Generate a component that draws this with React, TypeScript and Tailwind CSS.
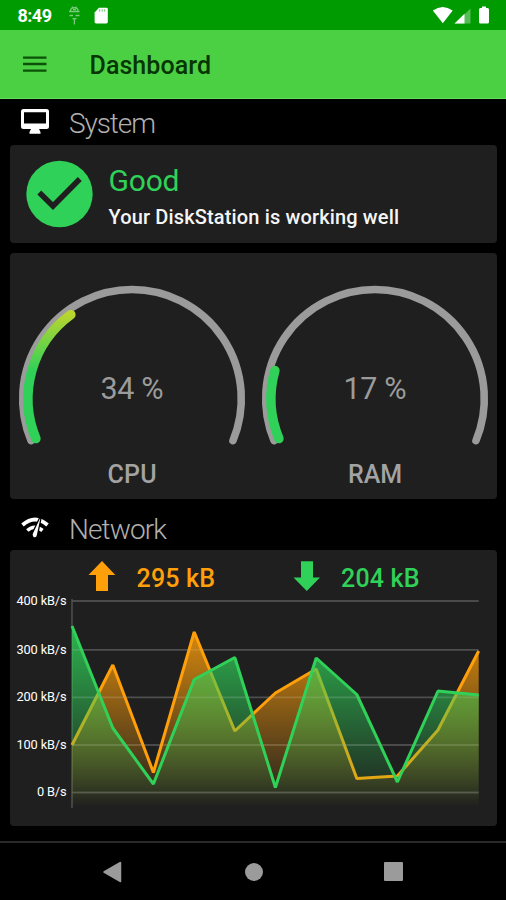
import type { ReactNode } from "react";

const ROBOTO = "font-[Roboto,sans-serif]";

function Label({ x, y, width, size, weight = 400, fill, children }: { x: number; y: number; width: number; size: number; weight?: number; fill: string; children: string }) {
  return (
    <text x={x} y={y} fontSize={size} fontWeight={weight} fill={fill} textLength={width} lengthAdjust="spacing">
      {children}
    </text>
  );
}

function StatusBar() {
  return (
    <div className="flex h-[30px] items-center bg-[#009b00] text-white">
      <svg className="ml-[17px]" width="36" height="30" viewBox="0 0 36 30">
        <Label x={0.5} y={22} width={34.5} size={18} weight={700} fill="#fff">8:49</Label>
      </svg>
      <svg className="ml-[14px]" width="15" height="30" viewBox="67 0 15 30" fill="none" stroke="#7cca7c" strokeWidth="1.300">
        <path d="M70.500 11c0-4.500 7.500-4.500 7.500 0M69 11.500h10.500M69.500 15.500h3.500M75.500 15.500h4M74.400 18v6.500M72.500 18.700h4" />
        <path d="M72.500 8.500v-2M76 8.500v-2M73 9.500h3" />
      </svg>
      <svg className="ml-[11px]" width="17" height="30" viewBox="93 0 17 30">
        <path fill="#fff" d="M99 7.800h7.500q1.300 0 1.300 1.300v13q0 1.400-1.400 1.400h-10.400q-1.400 0-1.400-1.400V12.500z" />
        <path stroke="#74c474" strokeWidth="1" d="M99.700 9.200v2.500M102.200 9.200v2.500M104.700 9.200v2.500" />
      </svg>
      <svg className="ml-auto mr-[12px]" width="62" height="30" viewBox="432 0 62 30" fill="#fff">
        <path d="M432.800 10.500Q442.700 3.500 452.700 10.500L442.800 23.300z" />
        <path fill="#55bd55" d="M470.500 8.500v15h-15.500z" />
        <path d="M464.500 13.800v9.700h-10z" />
        <path d="M480.500 8h1.500V6.500h4V8h1.500q1.500 0 1.500 1.500v12.500q0 1.500-1.500 1.500h-7q-1.500 0-1.500-1.500V9.500q0-1.500 1.500-1.500z" />
      </svg>
    </div>
  );
}

function AppBar() {
  return (
    <header className="flex h-[69px] items-center border-b border-[#67dc59] bg-[#4cd043]">
      <svg className="ml-[23px]" width="24" height="20" viewBox="0 0 24 20" stroke="#0b5108" strokeWidth="2.300">
        <path d="M0 3.600h23.500M0 10h23.500M0 16.600h23.500" />
      </svg>
      <svg className="ml-[42px]" width="140" height="36" viewBox="0 0 140 36">
        <Label x={0.5} y={27.5} width={121.5} size={25} weight={500} fill="#073604">Dashboard</Label>
      </svg>
    </header>
  );
}

function Heading({ icon, title, width, className }: { icon: ReactNode; title: string; width: number; className: string }) {
  return (
    <div className={className}>
      {icon}
      <svg className="ml-[20px]" width="120" height="46" viewBox="0 0 120 46">
        <Label x={0} y={33.5} width={width} size={28} weight={300} fill="#b0b0b0">{title}</Label>
      </svg>
    </div>
  );
}

function Gauge({ value, name, nameWidth }: { value: number; name: string; nameWidth: number }) {
  const point = (radius: number, degrees: number) => {
    const a = (degrees * Math.PI) / 180;
    return `${122 + radius * Math.cos(a)} ${145.800 + radius * Math.sin(a)}`;
  };
  return (
    <svg width="243" height="246" viewBox="0 0 243 246">
      <defs>
        <linearGradient id={`level-${name}`} gradientUnits="userSpaceOnUse" x1="0" y1="118" x2="0" y2="56">
          <stop offset="0" stopColor="#30d158" />
          <stop offset="1" stopColor="#c5d62b" />
        </linearGradient>
      </defs>
      <path d={`M${point(109.300, 157.500)}A109.300 109.300 0 1 1 ${point(109.300, 22.500)}`} fill="none" stroke="#9b9b9b" strokeWidth="7.600" strokeLinecap="round" />
      <path d={`M${point(104, 157.500)}A104 104 0 0 1 ${point(104, 157.500 + value * 2.250)}`} fill="none" stroke={`url(#level-${name})`} strokeWidth="9.500" strokeLinecap="round" />
      <Label x={90.5} y={146} width={63} size={30.5} fill="#9b9b9b">{`${value} %`}</Label>
      <Label x={122 - nameWidth / 2} y={230} width={nameWidth} size={25} weight={500} fill="#a3a3a3">{name}</Label>
    </svg>
  );
}

const xs = [72, 112.8, 153.4, 194.2, 234.8, 275.4, 316.2, 356.8, 397.4, 438, 478.7];
const upload = [745, 665, 772.5, 632, 731, 693, 669, 778.5, 776, 730, 651];
const download = [626, 728, 784, 679.5, 657.5, 787.5, 658, 694.5, 782, 691, 695];

function Series({ values, color, id }: { values: number[]; color: string; id: string }) {
  const line = values.map((y, i) => `${xs[i]} ${y}`).join("L");
  return (
    <g>
      <defs>
        <linearGradient id={id} gradientUnits="userSpaceOnUse" x1="0" y1="601" x2="0" y2="807">
          <stop offset="0" stopColor={color} stopOpacity="0.960" />
          <stop offset="1" stopColor={color} stopOpacity="0" />
        </linearGradient>
      </defs>
      <path d={`M72 807L${line}L478.700 807z`} fill={`url(#${id})`} />
      <path d={`M${line}`} fill="none" stroke={color} strokeWidth="3" strokeLinejoin="bevel" />
    </g>
  );
}

function Chart() {
  const ticks = [
    { y: 601, label: "400 kB/s", x: 16.5, w: 50 },
    { y: 649.8, label: "300 kB/s", x: 16.5, w: 50 },
    { y: 697.4, label: "200 kB/s", x: 16.5, w: 50 },
    { y: 745, label: "100 kB/s", x: 16.5, w: 50 },
    { y: 792.5, label: "0 B/s", x: 37, w: 29.5 },
  ];
  return (
    <svg width="487" height="276" viewBox="10 550 487 276">
      <path fill="#ff9f0a" d="M102 561L115.300 575H108V591H96V575H88.500z" />
      <path fill="#30d158" d="M306.800 591L320 577.500H313V561.200H301V577.500H293.500z" />
      <Label x={136.5} y={586.5} width={78.5} size={25} weight={500} fill="#ff9f0a">295 kB</Label>
      <Label x={341} y={586.5} width={78.5} size={25} weight={500} fill="#30d158">204 kB</Label>
      {ticks.map((t) => (
        <g key={t.label}>
          <path d={`M72 ${t.y}H478.700`} stroke="#414141" strokeWidth="1.800" />
          <Label x={t.x} y={t.y + 3.7} width={t.w} size={12.8} fill="#fff">{t.label}</Label>
        </g>
      ))}
      <path d="M72 599V808" stroke="#4a4a4a" strokeWidth="1.700" />
      <Series values={upload} color="#ff9f0a" id="upload-fill" />
      <Series values={download} color="#30d158" id="download-fill" />
      <g stroke="#b0b0b0" strokeOpacity="0.120" strokeWidth="1.700">
        {ticks.map((t) => <path key={t.label} d={`M72 ${t.y}H478.700`} />)}
      </g>
    </svg>
  );
}

export default function App() {
  return (
    <div className={`flex h-[900px] w-[506px] flex-col overflow-hidden bg-black [&_svg]:shrink-0 ${ROBOTO}`}>
      <StatusBar />
      <AppBar />
      <Heading
        className="flex h-[46px] items-center pl-[21px]"
        title="System"
        width={87}
        icon={
          <svg width="28" height="46" viewBox="21 99 28 46">
            <path fill="#fff" fillRule="evenodd" d="M23.500 109h23q2.500 0 2.500 2.500v15q0 2.500-2.500 2.500h-7.500l1.500 3v1.700H29.500V132l1.500-3h-7.500q-2.500 0-2.500-2.500v-15q0-2.500 2.500-2.500zM24 112.200v11.300h22v-11.300z" />
          </svg>
        }
      />
      <section className="mx-[10px] flex h-[98px] w-[487px] rounded-[4px] bg-[#1f1f1f]">
        <svg width="487" height="98" viewBox="10 145 487 98">
          <circle cx="59.500" cy="194" r="33.200" fill="#30d158" />
          <path d="M39.300 192.500L53 206L79.800 179" fill="none" stroke="#1f1f1f" strokeWidth="5.500" />
          <Label x={108.5} y={190.5} width={71} size={30} fill="#30d158">Good</Label>
          <Label x={108.5} y={223.8} width={290.5} size={20} weight={500} fill="#f5f5f5">Your DiskStation is working well</Label>
        </svg>
      </section>
      <section className="mx-[10px] mt-[10px] flex h-[246px] w-[487px] rounded-[4px] bg-[#1f1f1f]">
        <Gauge value={34} name="CPU" nameWidth={49} />
        <Gauge value={17} name="RAM" nameWidth={54} />
      </section>
      <Heading
        className="flex h-[51px] items-center pl-[21px] pt-[6px]"
        title="Network"
        width={98}
        icon={
          <svg width="28" height="46" viewBox="21 504.500 28 46" fill="none" stroke="#fff">
            <path d="M22.500 524.500Q35 513.500 47.500 524.500" strokeWidth="3.800" />
            <path d="M27.300 530Q34.500 523.500 42.500 530" strokeWidth="3.600" />
            <path d="M39.500 517.500L32 533.500Q32 537.500 35 537.500Q37 537.500 37.500 534.500L41 518z" fill="#fff" stroke="#000" strokeWidth="1.300" />
          </svg>
        }
      />
      <section className="mx-[10px] flex h-[276px] w-[487px] rounded-[4px] bg-[#1f1f1f]">
        <Chart />
      </section>
      <nav className="mt-[15px] flex h-[59px] items-center border-t-2 border-[#292929]">
        <svg className="ml-[102px]" width="20" height="22" viewBox="0 0 20 22">
          <path d="M2 11L18.500 1.500V20.500z" fill="#9b9b9b" stroke="#9b9b9b" strokeWidth="1.500" strokeLinejoin="round" />
        </svg>
        <div className="ml-[123px] h-[18px] w-[18px] rounded-full bg-[#9b9b9b]" />
        <div className="ml-[121px] h-[19px] w-[19px] rounded-[1px] bg-[#9b9b9b]" />
      </nav>
    </div>
  );
}
